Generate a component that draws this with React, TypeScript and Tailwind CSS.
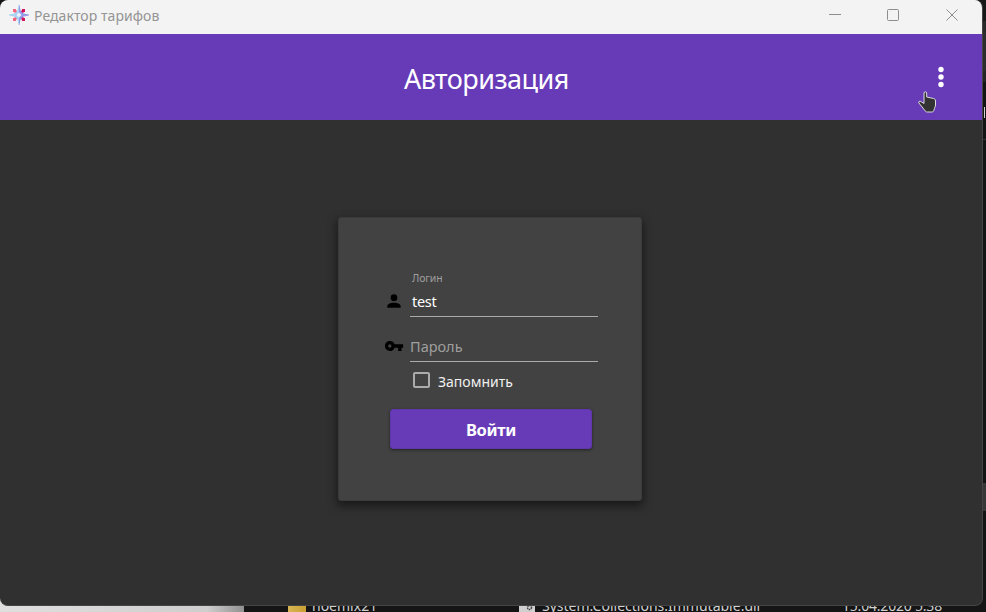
import React from 'react';

function AppLogo() {
  return (
    <svg width="20" height="20" viewBox="0 0 20 20">
      <path d="M4 4h3v1l2 2-2 2-2-2H4z" fill="#f5647c" />
      <path d="M4 16h3v-1l2-2-2-2-2 2H4z" fill="#f5647c" />
      <path d="M16 4h-3v1l-2 2 2 2 2-2h1z" fill="#d4145f" />
      <path d="M16 16h-3v-1l-2-2 2-2 2 2h1z" fill="#d4145f" />
      <path d="M10 0H9.500L8.500 5.500 5.500 8.500 0 9.500v1l5.500 1 3 3 1 5.500h.5z" fill="#a9d2f3" />
      <path d="M10 0h.5l1 5.500 3 3 5.500 1v1l-5.500 1-3 3-1 5.500H10z" fill="#949ae8" />
      <path d="M10 7.500l2.500 2.500-2.500 2.500L7.500 10z" fill="#eef3fc" />
    </svg>
  );
}

function TitleBar() {
  return (
    <header className="flex h-[34px] shrink-0 items-start bg-[#f3f3f3] pl-[9px] pt-[5px]">
      <AppLogo />
      <span className="ml-[5px] whitespace-nowrap text-[14px] leading-[22px] tracking-[0.06px] text-[#949494]">
        Редактор тарифов
      </span>
      <svg className="ml-auto mr-[23px]" width="130" height="20" viewBox="0 0 130 20" fill="none" stroke="#8e8e8e">
        <path d="M0 9.500h12" />
        <rect x="58.500" y="4.500" width="11" height="11" rx="1" />
        <path d="M117.500 4.500l11 11M128.500 4.500l-11 11" />
      </svg>
    </header>
  );
}

function Person() {
  return (
    <svg className="ml-[4px] mt-[2.500px] shrink-0" width="20" height="20" viewBox="0 0 24 24">
      <path d="M12 4a4 4 0 1 1 0 8 4 4 0 0 1 0-8m0 10c4.420 0 8 1.790 8 4v2H4v-2c0-2.210 3.580-4 8-4" />
    </svg>
  );
}

function KeyIcon() {
  return (
    <svg className="ml-[4px] shrink-0" width="20" height="20" viewBox="0 0 24 24">
      <path d="M7 14a2 2 0 1 1 0-4 2 2 0 0 1 0 4m5.650-4A5.990 5.990 0 0 0 7 6a6 6 0 0 0 0 12 5.990 5.990 0 0 0 5.650-4H17v4h4v-4h2v-4z" />
    </svg>
  );
}

function LoginCard() {
  return (
    <main className="ml-[338px] mt-[97px] flex h-[284px] w-[304px] flex-col rounded-[3px] border border-[#3b3b3b] bg-[#424242] pl-[41px] shadow-[0_4px_10px_1px_rgba(0,0,0,0.5)]">
      <label className="ml-[32px] mt-[51px] h-[19px] whitespace-nowrap text-[10.500px] leading-[18px] tracking-[-0.1px] text-[#9f9f9f]">Логин</label>
      <div className="flex h-[29px]">
        <Person />
        <div className="ml-[6px] h-[29px] w-[188px] border-b border-[#aaaaaa] pl-[2px]">
          <span className="block text-[14.500px] leading-[26px] tracking-[-0.3px] text-white">test</span>
        </div>
      </div>
      <div className="flex h-[45px] items-end">
        <div className="pb-[6px]"><KeyIcon /></div>
        <div className="ml-[6px] h-[29px] w-[188px] border-b border-[#aaaaaa]">
          <span className="block text-[14.500px] leading-[26px] text-[#9f9f9f]">Пароль</span>
        </div>
      </div>
      <div className="ml-[33px] mt-[10px] flex h-[18px] items-start">
        <span className="h-[16px] w-[17px] rounded-[2px] border-2 border-[#ababab]" />
        <span className="ml-[8px] whitespace-nowrap text-[14px] leading-[20px] text-[#f0f0f0]">Запомнить</span>
      </div>
      <button className="ml-[10px] mt-[19px] h-[40px] w-[202px] rounded-[3px] border border-[#6037ab] bg-[#673ab7] text-[16.500px] font-bold leading-[40px] tracking-[-0.3px] text-white shadow-[0_1px_3px_rgba(0,0,0,0.500)]">
        Войти
      </button>
    </main>
  );
}

function Hand() {
  return (
    <svg className="absolute left-[918px] top-[91px]" width="19" height="23" viewBox="0 0 19 23">
      <path
        d="M6 12.500V2c0-1.500 2.700-1.500 2.700 0v4l6.800 1.500c1.500.4 2 1 2 2.500v4c0 1.500-1 2.500-1.500 5-.3 1.500-1 2-2.500 2H9.500c-1.500 0-2-.5-3-2L.9 12c-.8-1.500.8-2.300 2-1.500z"
        fill="#333"
        stroke="#ddd"
        strokeWidth="1"
      />
    </svg>
  );
}

function Desktop() {
  return (
    <>
      <div className="absolute right-0 top-0 h-[612px] w-[12px] bg-[#141414]">
        <div className="h-[21px] bg-[#181818]" />
        <div className="h-[10px] bg-[#292929]" />
        <div className="h-[40px] bg-[#2d2d2d]" />
        <div className="h-[11px] bg-[#252525]" />
        <div className="mr-px mt-[25px] h-[11px] border-r-[1px] border-[#d0d0d0]" />
        <div className="mt-[21px] h-px bg-[#333]" />
        <div className="mt-[343px] h-[28px] bg-[#373737]" />
      </div>
      <div className="absolute bottom-0 left-0 flex h-[14px] w-[986px] overflow-hidden bg-[#151515]">
        <div className="w-[244px] shrink-0 bg-[linear-gradient(to_right,#dfdfdf,#cecece_85%,#919191)]" />
        <div className="ml-[44px] w-[18px] bg-[linear-gradient(to_right,#d9b755,#c99f32)]" />
        <span className="ml-[6px] w-[207px] whitespace-nowrap text-[14px] leading-[15px] text-[#d0d0d0]">noemix21</span>
        <svg className="mt-[6px]" width="16" height="8" viewBox="0 0 16 8">
          <path d="M0 0h16v8H0z" fill="#d0d0d0" />
          <circle cx="10.500" cy="3.500" r="2" fill="none" stroke="#444" strokeWidth="1.500" strokeDasharray="1.500 .6" />
        </svg>
        <span className="ml-[7px] w-[300px] whitespace-nowrap text-[14px] leading-[15px] text-[#d0d0d0]">System.Collections.Immutable.dll</span>
        <span className="whitespace-nowrap text-[14px] leading-[15px] tracking-[-0.2px] text-[#d0d0d0]">15.04.2020 5:38</span>
      </div>
    </>
  );
}

export default function App() {
  return (
    <div className="relative h-[612px] w-[986px] overflow-hidden bg-[#141414] font-['Noto_Sans','Open_Sans',sans-serif]">
      <Desktop />
      <div className="absolute left-0 top-0 flex h-[606px] w-[983px] flex-col overflow-hidden rounded-[8px] border-b border-r border-[#444] bg-[#303030]">
        <TitleBar />
        <div className="flex h-[86px] shrink-0 items-center bg-[#673ab7]">
          <h1 className="ml-[404px] mt-[4px] whitespace-nowrap text-[27px] leading-[40px] tracking-[-0.55px] text-white">Авторизация</h1>
          <svg className="ml-auto mr-[36px]" width="10" height="24" viewBox="0 0 10 24" fill="white">
            <circle cx="5" cy="4.500" r="2.700" />
            <circle cx="5" cy="12" r="2.700" />
            <circle cx="5" cy="19.500" r="2.700" />
          </svg>
        </div>
        <LoginCard />
      </div>
      <Hand />
    </div>
  );
}
